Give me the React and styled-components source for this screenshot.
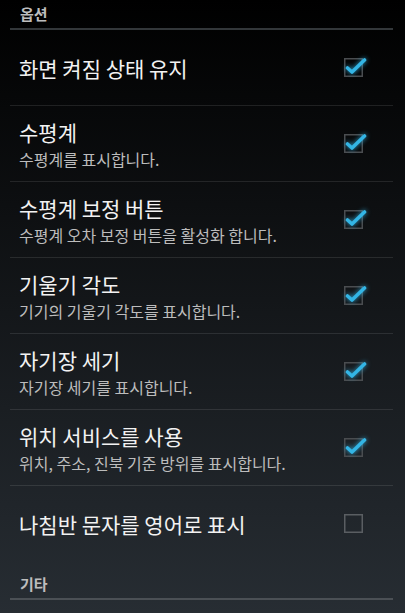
import React from 'react';
import styled, { createGlobalStyle } from 'styled-components';

const GlobalStyle = createGlobalStyle`
  html, body {
    margin: 0;
    padding: 0;
    background: #000;
  }
  body {
    font-family: "Noto Sans CJK KR", "Noto Sans", sans-serif;
  }
`;

const Screen = styled.div`
  width: 405px;
  height: 613px;
  overflow: hidden;
  background: linear-gradient(to bottom, #000000 0%, #272d33 100%);
  display: flex;
  flex-direction: column;
`;

const CategoryHeader = styled.div`
  display: flex;
  flex-direction: column;
  padding: ${(p) => (p.first ? '3px' : '12px')} 12px 0 10px;
`;

const CategoryTitle = styled.div`
  padding-left: 10px;
  height: 22px;
  line-height: 22px;
  font-size: 15px;
  font-weight: 700;
  color: #bdbdbd;
`;

const CategoryLine = styled.div`
  margin-top: 3px;
  height: 2px;
  background: ${(p) => (p.first ? '#33373a' : '#4b5055')};
`;

const Row = styled.div`
  margin: 0 12px 0 10px;
  height: 75px;
  display: flex;
  align-items: center;
  border-bottom: ${(p) => (p.last ? 'none' : '1px solid rgba(255, 255, 255, 0.1)')};
`;

const TextBox = styled.div`
  flex: 1;
  padding-left: 9px;
  padding-top: ${(p) => (p.twoLine ? '2px' : '0')};
  display: flex;
  flex-direction: column;
`;

const Title = styled.div`
  font-size: 21px;
  line-height: 28px;
  color: #f2f2f2;
`;

const Summary = styled.div`
  margin-top: 1px;
  font-size: 16px;
  line-height: 24px;
  color: #bcbcbc;
`;

const CheckWrap = styled.div`
  width: 19px;
  height: 19px;
  margin-right: 30px;
  flex-shrink: 0;

  svg {
    display: block;
    overflow: visible;
  }
`;

const Check = ({ checked }) => (
  <CheckWrap>
    <svg width="19" height="19" viewBox="0 0 19 19">
      <rect
        x="0.75"
        y="0.75"
        width="17.5"
        height="17.5"
        fill="none"
        stroke={checked ? '#4a4d50' : '#5a5e62'}
        strokeWidth="1.5"
      />
      {checked && (
        <g style={{ filter: 'drop-shadow(0 0 2.5px rgba(51, 181, 229, 0.9))' }}>
          <path
            d="M3.5 10 L8 14 L20.5 2"
            fill="none"
            stroke="#33b5e5"
            strokeWidth="3.6"
            strokeLinecap="round"
            strokeLinejoin="round"
          />
        </g>
      )}
    </svg>
  </CheckWrap>
);

const items = [
  { title: '화면 켜짐 상태 유지', checked: true },
  { title: '수평계', summary: '수평계를 표시합니다.', checked: true },
  { title: '수평계 보정 버튼', summary: '수평계 오차 보정 버튼을 활성화 합니다.', checked: true },
  { title: '기울기 각도', summary: '기기의 기울기 각도를 표시합니다.', checked: true },
  { title: '자기장 세기', summary: '자기장 세기를 표시합니다.', checked: true },
  { title: '위치 서비스를 사용', summary: '위치, 주소, 진북 기준 방위를 표시합니다.', checked: true },
  { title: '나침반 문자를 영어로 표시', checked: false },
];

export default function App() {
  return (
    <>
      <GlobalStyle />
      <Screen>
        <CategoryHeader first>
          <CategoryTitle>옵션</CategoryTitle>
          <CategoryLine first />
        </CategoryHeader>
        {items.map((it, i) => (
          <Row key={it.title} last={i === items.length - 1}>
            <TextBox twoLine={!!it.summary}>
              <Title>{it.title}</Title>
              {it.summary && <Summary>{it.summary}</Summary>}
            </TextBox>
            <Check checked={it.checked} />
          </Row>
        ))}
        <CategoryHeader>
          <CategoryTitle>기타</CategoryTitle>
          <CategoryLine />
        </CategoryHeader>
      </Screen>
    </>
  );
}
